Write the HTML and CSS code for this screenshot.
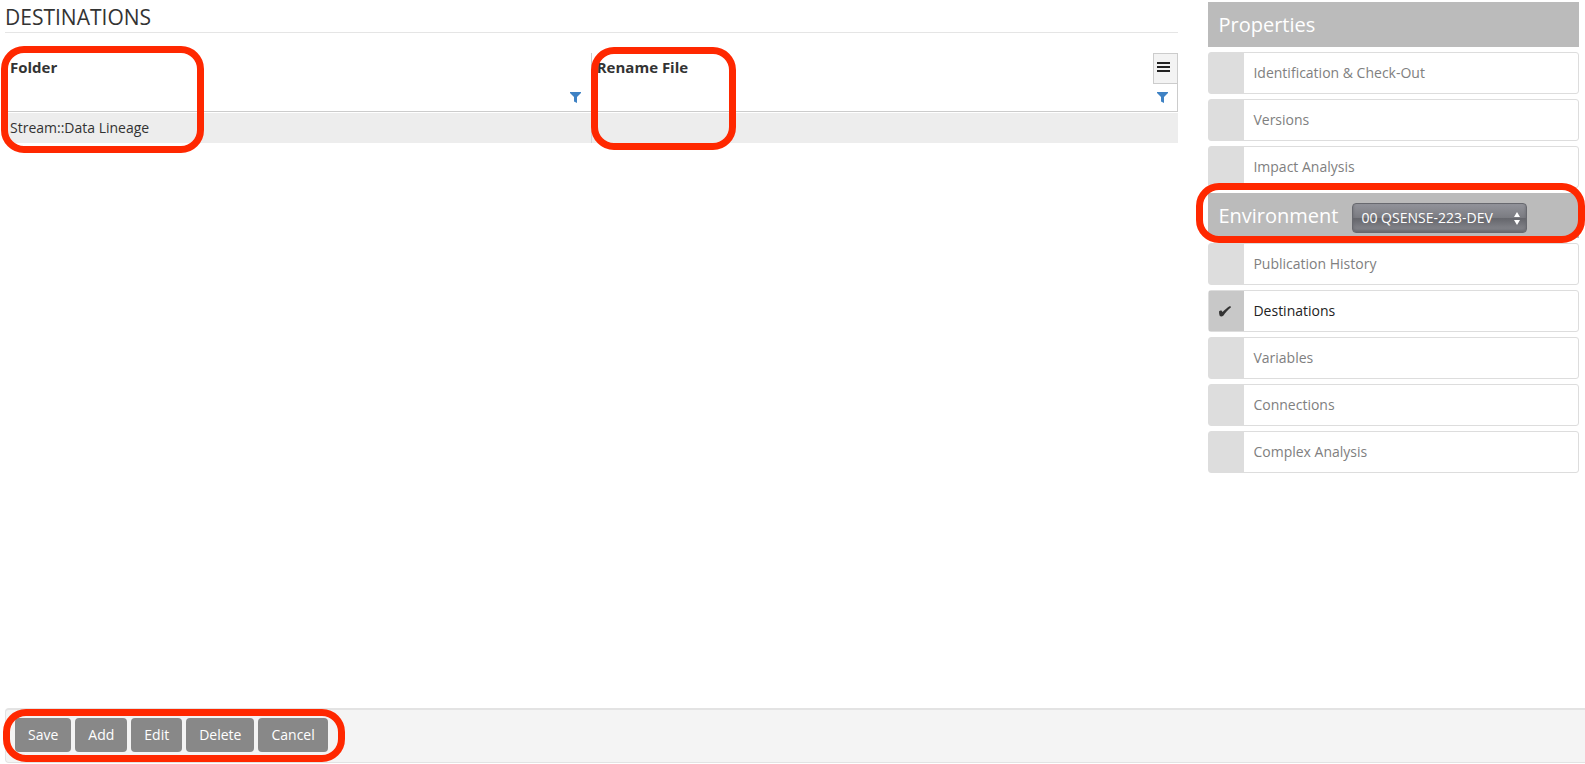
FILE: index.html
```html
<!DOCTYPE html>
<html lang="en">
<head>
<meta charset="utf-8">
<meta name="viewport" content="width=device-width, initial-scale=1">
<title>Destinations</title>
<link rel="stylesheet" href="styles.css">
</head>
<body>
<div class="content">
  <main class="main">
    <h1 class="title">DESTINATIONS</h1>
    <table class="grid">
      <thead>
        <tr>
          <th scope="col">
            <div class="head-cell">
              <span class="head-label">Folder</span>
              <button class="filter" type="button" aria-label="Filter Folder">
                <svg width="11" height="11" viewBox="0 0 11 11"><path d="M0 0h11v1L7 5V11L4 9.500V5L0 1z" fill="#3f82c4"/></svg>
              </button>
              <span class="mark mark-folder"></span>
            </div>
          </th>
          <th scope="col">
            <div class="head-cell head-cell-last">
              <span class="head-label">Rename File</span>
              <button class="menu" type="button" aria-label="Grid menu">
                <svg width="13" height="11" viewBox="0 0 13 11"><path d="M0 0h13v2H0zM0 4h13v2H0zM0 8h13v2H0z" fill="#222"/></svg>
              </button>
              <button class="filter" type="button" aria-label="Filter Rename File">
                <svg width="11" height="11" viewBox="0 0 11 11"><path d="M0 0h11v1L7 5V11L4 9.500V5L0 1z" fill="#3f82c4"/></svg>
              </button>
              <span class="mark mark-rename"></span>
            </div>
          </th>
        </tr>
      </thead>
      <tbody>
        <tr><td>Stream::Data Lineage</td><td></td></tr>
      </tbody>
    </table>
  </main>
  <aside class="side">
    <h2 class="side-head">Properties</h2>
    <a class="item" href="#"><span class="tick"></span><span class="name">Identification &amp; Check-Out</span></a>
    <a class="item" href="#"><span class="tick"></span><span class="name">Versions</span></a>
    <a class="item" href="#"><span class="tick"></span><span class="name">Impact Analysis</span></a>
    <div class="side-head">
      <label for="environment">Environment</label>
      <span class="picker">
        <select id="environment"><option>00 QSENSE-223-DEV</option></select>
        <svg class="arrows" width="6" height="13" viewBox="0 0 6 13"><path d="M0 5l3-5 3 5zM0 8l3 5 3-5z" fill="#fff"/></svg>
      </span>
      <span class="mark mark-environment"></span>
    </div>
    <a class="item" href="#"><span class="tick"></span><span class="name">Publication History</span></a>
    <a class="item item-active" href="#" aria-current="page"><span class="tick"><svg width="12" height="11" viewBox="0 0 12 11"><path d="M0 5.500Q1 4 2.500 4.500L3.500 6C6 3.500 8.500 1.500 10.500.2Q12.500 0 11.800 1.500C9 3.500 6.500 6.500 4.500 9.500Q2.500 11.200.8 10Q0 8 0 5.500z" fill="#333"/></svg></span><span class="name">Destinations</span></a>
    <a class="item" href="#"><span class="tick"></span><span class="name">Variables</span></a>
    <a class="item" href="#"><span class="tick"></span><span class="name">Connections</span></a>
    <a class="item" href="#"><span class="tick"></span><span class="name">Complex Analysis</span></a>
  </aside>
</div>
<footer class="bar">
  <div class="actions">
    <button class="btn" type="button">Save</button>
    <button class="btn" type="button">Add</button>
    <button class="btn" type="button">Edit</button>
    <button class="btn" type="button">Delete</button>
    <button class="btn" type="button">Cancel</button>
    <span class="mark mark-actions"></span>
  </div>
</footer>
</body>
</html>
```
FILE: styles.css
```css
* {
  box-sizing: border-box;
}

body {
  margin: 0;
  min-height: 100vh;
  display: flex;
  flex-direction: column;
  background: #fff;
  color: #333;
  font: 14px/20px "Open Sans", "Noto Sans", sans-serif;
  overflow-x: hidden;
}

.content {
  flex: 1;
  display: grid;
  grid-template-columns: 76fr 24fr;
  column-gap: 30px;
  padding: 2px 6px 20px 5px;
}

.title {
  margin: 0 0 20px;
  border-bottom: 1px solid #e5e5e5;
  font-size: 21px;
  line-height: 30px;
  font-weight: 400;
}

/* Grid */
.grid {
  width: 100%;
  table-layout: fixed;
  border-collapse: separate;
  border-spacing: 0;
}

.grid th {
  padding: 0;
  text-align: left;
  border-bottom: 1px solid #ccc;
}

.grid th:first-child {
  border-right: 1px solid #ccc;
}

.grid th:last-child {
  border-right: 1px solid #ccc;
}

.head-cell {
  position: relative;
  display: grid;
  grid-template-columns: 1fr auto;
  grid-template-rows: 31px 27px;
  padding-left: 5px;
}

.head-label {
  padding-top: 4px;
  font-size: 15px;
}

.filter {
  grid-column: 2;
  grid-row: 2;
  justify-self: end;
  display: flex;
  width: 21px;
  padding: 8px 0 0;
  border: 0;
  background: none;
}

.head-cell-last {
  margin-right: -1px;
}

.menu {
  grid-column: 2;
  display: flex;
  width: 25px;
  padding: 8px 0 0 3px;
  border: 1px solid #ccc;
  background: #f3f3f3;
}

.grid td {
  height: 31px;
  padding: 0 5px;
  background: #ededed;
  border-top: 1px solid #fff;
}

.grid td:first-child {
  border-right: 1px solid #d4d4d4;
}

/* Side panel */
.side {
  display: flex;
  flex-direction: column;
  gap: 5px;
}

.side-head {
  position: relative;
  display: flex;
  align-items: center;
  gap: 14px;
  height: 45px;
  margin: 0;
  padding-left: 10px;
  background: #bbb;
  color: #fff;
  font-size: 20px;
  font-weight: 400;
}

.item {
  display: flex;
  height: 42px;
  border: 1px solid #ddd;
  border-radius: 3px;
  color: #808080;
  text-decoration: none;
}

.tick {
  display: flex;
  align-items: center;
  width: 35px;
  padding-left: 10px;
  background: #ddd;
}

.name {
  align-self: center;
  padding-left: 9px;
}

.item-active {
  color: #222;
}

.item-active .tick {
  background: #c8c8c8;
}

.picker {
  position: relative;
  padding-top: 5px;
  display: flex;
}

.picker select {
  appearance: none;
  width: 175px;
  height: 30px;
  padding: 0 8px;
  border: 1px solid #68696f;
  border-radius: 4px;
  background: linear-gradient(#92939a, #7b7c82 48%, #65666c 52%, #8b8c92);
  box-shadow: inset 0 -2px 3px #68696f;
  color: #fff;
  font: inherit;
  font-size: 14px;
}

.arrows {
  position: absolute;
  right: 7px;
  top: 14px;
}

/* Footer */
.bar {
  margin: 0 0 1px 5px;
  padding: 8px 9px 10px;
  border: solid #e3e3e3;
  border-width: 2px 0 1px 1px;
  border-radius: 4px 0 0 4px;
  background: #f4f4f4;
}

.actions {
  position: relative;
  display: inline-flex;
  vertical-align: top;
  gap: 4px;
}

.btn {
  height: 34px;
  padding: 0 13px;
  border: 0;
  border-radius: 4px;
  background: #888;
  color: #fff;
  font: inherit;
}

/* Highlight outlines */
.mark {
  position: absolute;
  z-index: 1;
  border: 7px solid #ff2800;
  border-radius: 23px;
  pointer-events: none;
}

.mark-folder {
  left: -4px;
  top: -7px;
  width: 203px;
  height: 107px;
}

.mark-rename {
  left: -1px;
  top: -6px;
  width: 145px;
  height: 103px;
}

.mark-environment {
  inset: -10px -6px -5px -12px;
}

.mark-actions {
  inset: -9px -17px -10px -12px;
}
```
